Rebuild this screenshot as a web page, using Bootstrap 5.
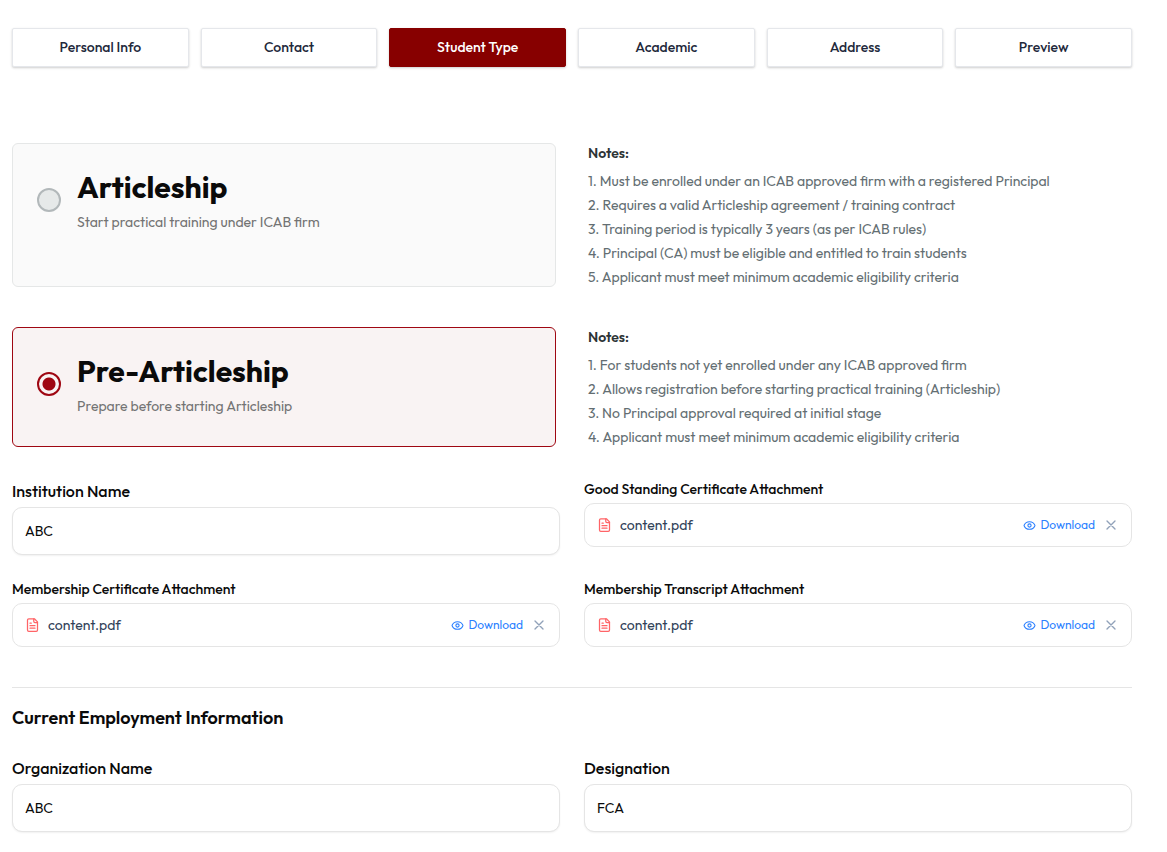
<!DOCTYPE html>
<html lang="en">
<head>
<meta charset="utf-8">
<meta name="viewport" content="width=device-width, initial-scale=1">
<title>Student Registration</title>
<link href="https://cdn.jsdelivr.net/npm/bootstrap@5.3.0/dist/css/bootstrap.min.css" rel="stylesheet">
<style>
  body { font-family: Outfit, Lato, sans-serif; font-size: 14px; line-height: 20px; color: #0a0a0a; background: #fff; }
  .page-wrap { padding: 28px 35px 20px 12px; }
  .step-nav { display: grid; grid-template-columns: repeat(6, 1fr); gap: 12px; margin-bottom: 76px; }
  .step-btn { --bs-btn-font-size: 14px; --bs-btn-line-height: 19px; --bs-btn-padding-y: 9px; --bs-btn-border-radius: 2px;
    --bs-btn-color: #1e293b; --bs-btn-bg: #fff; --bs-btn-border-color: #e5e7eb; --bs-btn-font-weight: 500;
    --bs-btn-active-color: #fff; --bs-btn-active-bg: #870000; --bs-btn-active-border-color: #870000;
    box-shadow: 0 1px 3px rgba(0,0,0,.1), 0 1px 2px rgba(0,0,0,.1); }
  .type-grid { display: grid; grid-template-columns: 1fr 1fr; gap: 40px 32px; margin-bottom: 32px; }
  .type-card { padding: 24px; border: 1px solid #e5e7e7; border-radius: 6px; background: #fafafa; cursor: pointer; }
  .type-card:has(:checked) { border-color: #9f0712; background: #f9f3f3; }
  .type-radio.form-check-input { width: 24px; height: 24px; margin: 0; border: 2px solid #b2b8ba; background: #e6e9e9; }
  .type-radio.form-check-input:checked { border-color: #9f0712; background: radial-gradient(circle, #9f0712 6px, #f9f3f3 7px); }
  .type-text { display: grid; gap: 6px; }
  .type-title { font-size: 30px; line-height: 38px; font-weight: 700; }
  .type-desc { color: #737373; }
  .type-notes { color: #636e72; }
  .type-notes h2 { font-size: 14px; line-height: 20px; font-weight: 600; color: #2d3436; margin-bottom: 8px; }
  .type-notes ol { display: grid; gap: 4px; }
  .field-grid { display: grid; grid-template-columns: 1fr 1fr; gap: 24px; align-items: start; }
  .field-label { font-size: 16px; line-height: 24px; font-weight: 500; margin-bottom: 4px; }
  .file-label { font-weight: 500; margin-bottom: 4px; }
  .field-box.form-control { height: 48px; padding: 0 12px; font-size: 14px; color: #0a0a0a; border-color: #e5e5e5; border-radius: 10px; box-shadow: 0 1px 2px rgba(0,0,0,.06); }
  .file-box { height: 44px; padding: 0 12px; border: 1px solid #e5e5e5; border-radius: 10px; }
  .file-name { color: #314158; }
  .file-link { font-size: 12px; line-height: 16px; color: #2b7fff; }
  .file-remove { width: 16px; height: 16px; color: #90a1b9; }
  .section-title { font-size: 18px; line-height: 28px; font-weight: 600; margin: 0 0 24px; }
  .section-rule { margin: 40px 0 16px; border-color: #e5e5e5; opacity: 1; }
  svg { fill: none; stroke: currentColor; stroke-width: 2; stroke-linecap: round; stroke-linejoin: round; flex: none; }
</style>
</head>
<body>
<svg class="d-none">
  <symbol id="i-file" viewBox="0 0 24 24"><path d="M15 2H6a2 2 0 0 0-2 2v16a2 2 0 0 0 2 2h12a2 2 0 0 0 2-2V7Z"/><path d="M14 2v4a2 2 0 0 0 2 2h4M10 9H8M16 13H8M16 17H8"/></symbol>
  <symbol id="i-eye" viewBox="0 0 24 24"><path d="M2.06 12.35a1 1 0 0 1 0-.7 10.75 10.75 0 0 1 19.88 0 1 1 0 0 1 0 .7 10.75 10.75 0 0 1-19.88 0"/><circle cx="12" cy="12" r="3"/></symbol>
  <symbol id="i-x" viewBox="0 0 24 24"><path d="M18 6 6 18M6 6l12 12"/></symbol>
</svg>
<main class="page-wrap">
  <nav class="step-nav" aria-label="Registration steps">
    <button type="button" class="btn step-btn">Personal Info</button>
    <button type="button" class="btn step-btn">Contact</button>
    <button type="button" class="btn step-btn active" aria-current="step">Student Type</button>
    <button type="button" class="btn step-btn">Academic</button>
    <button type="button" class="btn step-btn">Address</button>
    <button type="button" class="btn step-btn">Preview</button>
  </nav>

  <form>
    <div class="type-grid">
      <label class="type-card" for="type-art">
        <span class="d-flex align-items-center gap-3">
          <input class="form-check-input type-radio flex-shrink-0" type="radio" name="type" id="type-art">
          <span class="type-text"><span class="type-title">Articleship</span><span class="type-desc">Start practical training under ICAB firm</span></span>
        </span>
      </label>
      <section class="type-notes">
        <h2>Notes:</h2>
        <ol class="list-unstyled m-0">
          <li>1. Must be enrolled under an ICAB approved firm with a registered Principal</li>
          <li>2. Requires a valid Articleship agreement / training contract</li>
          <li>3. Training period is typically 3 years (as per ICAB rules)</li>
          <li>4. Principal (CA) must be eligible and entitled to train students</li>
          <li>5. Applicant must meet minimum academic eligibility criteria</li>
        </ol>
      </section>
      <label class="type-card" for="type-pre">
        <span class="d-flex align-items-center gap-3">
          <input class="form-check-input type-radio flex-shrink-0" type="radio" name="type" id="type-pre" checked>
          <span class="type-text"><span class="type-title">Pre-Articleship</span><span class="type-desc">Prepare before starting Articleship</span></span>
        </span>
      </label>
      <section class="type-notes">
        <h2>Notes:</h2>
        <ol class="list-unstyled m-0">
          <li>1. For students not yet enrolled under any ICAB approved firm</li>
          <li>2. Allows registration before starting practical training (Articleship)</li>
          <li>3. No Principal approval required at initial stage</li>
          <li>4. Applicant must meet minimum academic eligibility criteria</li>
        </ol>
      </section>
    </div>

    <div class="field-grid">
      <div>
        <label class="d-block field-label" for="institution">Institution Name</label>
        <input class="form-control field-box" id="institution" type="text" value="ABC">
      </div>
      <div role="group" aria-labelledby="lbl-standing">
        <div class="file-label" id="lbl-standing">Good Standing Certificate Attachment</div>
        <div class="file-box d-flex align-items-center gap-2">
          <svg width="15" height="16" color="#ff6467"><use href="#i-file"/></svg>
          <span class="file-name me-auto">content.pdf</span>
          <a class="file-link d-flex align-items-center gap-1 text-decoration-none" href="#"><svg width="13" height="13"><use href="#i-eye"/></svg>Download</a>
          <button type="button" class="btn p-0 border-0 d-flex file-remove" aria-label="Remove file"><svg width="16" height="16"><use href="#i-x"/></svg></button>
        </div>
      </div>
      <div role="group" aria-labelledby="lbl-member">
        <div class="file-label" id="lbl-member">Membership Certificate Attachment</div>
        <div class="file-box d-flex align-items-center gap-2">
          <svg width="15" height="16" color="#ff6467"><use href="#i-file"/></svg>
          <span class="file-name me-auto">content.pdf</span>
          <a class="file-link d-flex align-items-center gap-1 text-decoration-none" href="#"><svg width="13" height="13"><use href="#i-eye"/></svg>Download</a>
          <button type="button" class="btn p-0 border-0 d-flex file-remove" aria-label="Remove file"><svg width="16" height="16"><use href="#i-x"/></svg></button>
        </div>
      </div>
      <div role="group" aria-labelledby="lbl-transcript">
        <div class="file-label" id="lbl-transcript">Membership Transcript Attachment</div>
        <div class="file-box d-flex align-items-center gap-2">
          <svg width="15" height="16" color="#ff6467"><use href="#i-file"/></svg>
          <span class="file-name me-auto">content.pdf</span>
          <a class="file-link d-flex align-items-center gap-1 text-decoration-none" href="#"><svg width="13" height="13"><use href="#i-eye"/></svg>Download</a>
          <button type="button" class="btn p-0 border-0 d-flex file-remove" aria-label="Remove file"><svg width="16" height="16"><use href="#i-x"/></svg></button>
        </div>
      </div>
    </div>

    <hr class="section-rule">
    <h2 class="section-title">Current Employment Information</h2>
    <div class="field-grid">
      <div>
        <label class="d-block field-label" for="organization">Organization Name</label>
        <input class="form-control field-box" id="organization" type="text" value="ABC">
      </div>
      <div>
        <label class="d-block field-label" for="designation">Designation</label>
        <input class="form-control field-box" id="designation" type="text" value="FCA">
      </div>
    </div>
  </form>
</main>
<script src="https://cdn.jsdelivr.net/npm/bootstrap@5.3.0/dist/js/bootstrap.bundle.min.js"></script>
</body>
</html>
